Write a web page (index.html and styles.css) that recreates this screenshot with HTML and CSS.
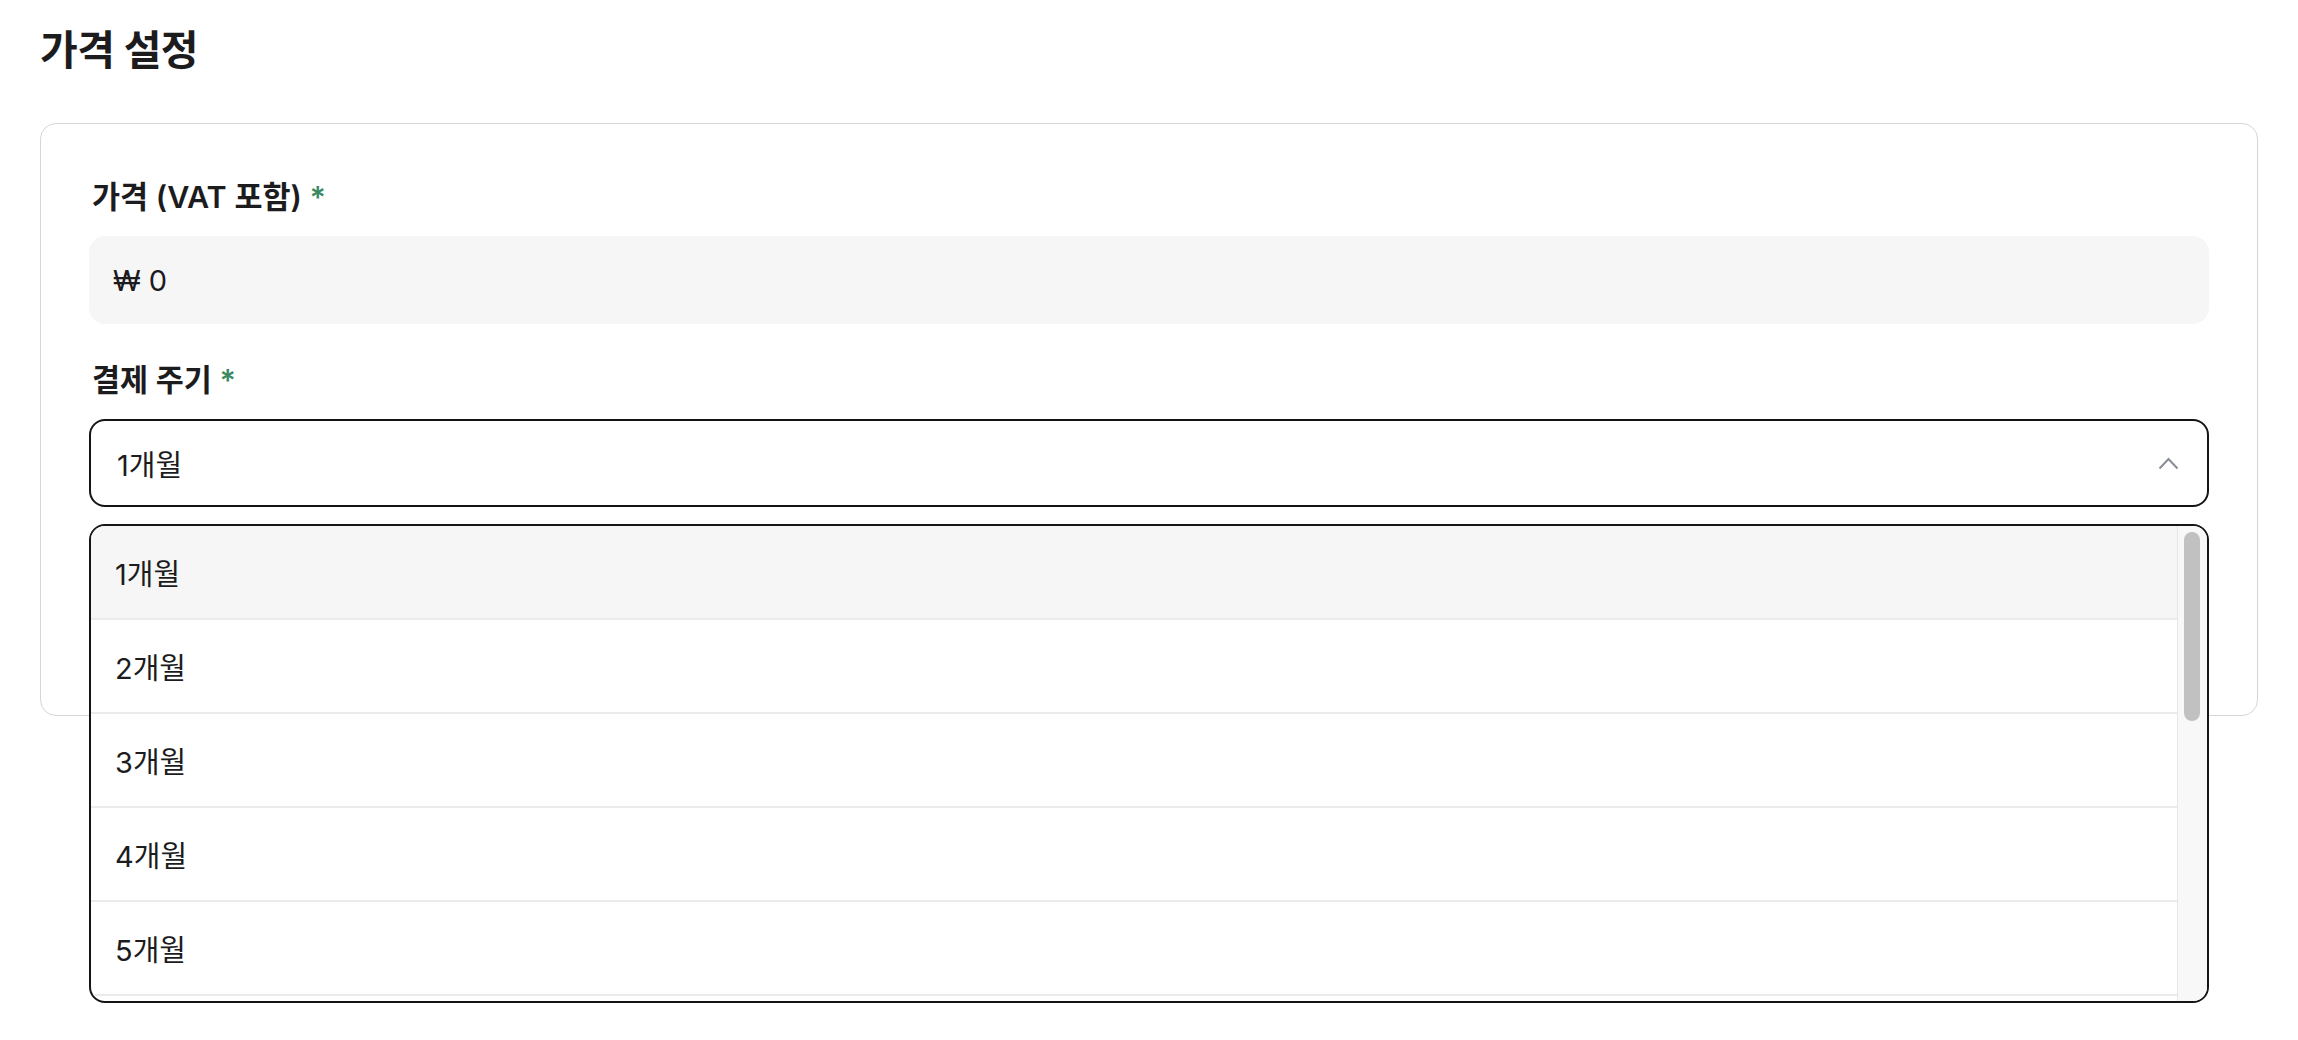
FILE: index.html
```html
<!DOCTYPE html>
<html lang="ko">
<head>
<meta charset="utf-8">
<title>가격 설정</title>
<link rel="stylesheet" href="styles.css">
</head>
<body>
<main class="page">
  <h1 class="title">가격 설정</h1>
  <section class="card">
    <div class="field">
      <label class="label">가격 (VAT 포함) <span class="req">*</span></label>
      <div class="input">₩ 0</div>
    </div>
    <div class="field">
      <label class="label">결제 주기 <span class="req">*</span></label>
      <div class="select-wrap">
        <div class="select">
          <span>1개월</span>
          <svg class="chevron" width="21" height="13" viewBox="0 0 21 13"><polyline points="1.5,11.5 10.5,2 19.5,11.5" fill="none" stroke="#8a8d95" stroke-width="2"/></svg>
        </div>
        <div class="dropdown">
          <ul class="options">
            <li class="option active">1개월</li>
            <li class="option">2개월</li>
            <li class="option">3개월</li>
            <li class="option">4개월</li>
            <li class="option">5개월</li>
            <li class="option">6개월</li>
          </ul>
          <div class="scrollbar"><div class="thumb"></div></div>
        </div>
      </div>
    </div>
  </section>
</main>
</body>
</html>
```

FILE: styles.css
```css
* { box-sizing: border-box; }
html, body { margin: 0; background: #fff; }
body {
  min-height: 1040px;
  font-family: Inter, "Noto Sans CJK KR", sans-serif;
  color: #1c1c1e;
}
.page {
  padding: 24px 40px 0 40px;
  min-height: 1040px;
}
.title {
  margin: 0 0 47px 0;
  font-size: 41px;
  line-height: 52px;
  font-weight: 700;
  letter-spacing: -0.5px;
}
.card {
  border: 1px solid #d6d6da;
  border-radius: 16px;
  padding: 51px 48px 208px 48px;
  display: flex;
  flex-direction: column;
  gap: 34px;
}
.field {
  display: flex;
  flex-direction: column;
  gap: 17px;
}
.label {
  font-size: 30.5px;
  line-height: 44px;
  font-weight: 600;
  padding-left: 3px;
}
.req { color: #3a8a63; }
.input {
  height: 88px;
  border-radius: 16px;
  background: #f6f6f6;
  padding: 0 24px;
  display: flex;
  align-items: center;
  font-size: 29px;
}
.select-wrap { position: relative; }
.select {
  height: 88px;
  border: 2px solid #151515;
  border-radius: 16px;
  padding: 0 28px 0 26px;
  display: flex;
  align-items: center;
  justify-content: space-between;
  font-size: 29px;
}
.dropdown {
  position: absolute;
  left: 0;
  right: 0;
  top: calc(100% + 17px);
  height: 479px;
  border: 2px solid #151515;
  border-radius: 16px;
  background: #fff;
  overflow: hidden;
  display: flex;
  z-index: 2;
}
.options {
  list-style: none;
  margin: 0;
  padding: 0;
  flex: 1;
}
.option {
  height: 94px;
  border-bottom: 2px solid #ebebeb;
  padding-left: 24px;
  display: flex;
  align-items: center;
  font-size: 29px;
}
.option.active { background: #f6f6f6; }
.scrollbar {
  width: 30px;
  background: #f8f8f8;
  border-left: 1px solid #e6e6e6;
  padding: 6px 6px 0 6px;
}
.thumb {
  width: 16px;
  height: 189px;
  border-radius: 8px;
  background: #c1c1c1;
}
```
